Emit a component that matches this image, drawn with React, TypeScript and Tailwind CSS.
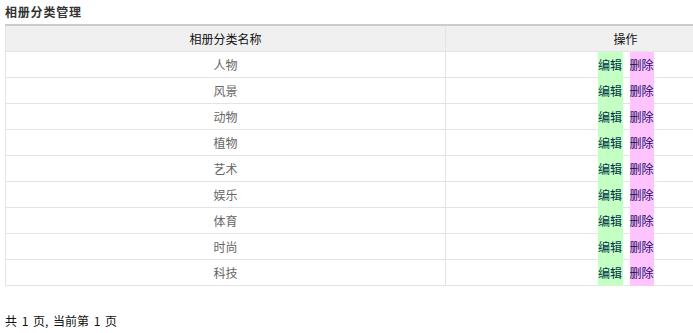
import React from "react";

const rows = ["人物", "风景", "动物", "植物", "艺术", "娱乐", "体育", "时尚", "科技"];

export default function App() {
  const font = { fontFamily: '"Noto Sans CJK SC", "Liberation Sans", sans-serif' };
  return (
    <div className="w-[693px] h-[333px] overflow-hidden bg-white text-[12px] leading-none" style={font}>
      <div className="h-[24px] pl-[5px] flex items-center font-bold text-[#333] tracking-[0.8px]">相册分类管理</div>
      <div className="ml-[5px] w-[800px] border-t-2 border-[#cccccc]">
        <div className="flex h-[26px] bg-[#f0f0f0] border-b border-[#e3e3e3] text-[#111]">
          <div className="w-[440px] border-l border-[#e3e3e3] flex items-center justify-center">相册分类名称</div>
          <div className="w-[360px] border-l border-[#e3e3e3] flex items-center justify-center">操作</div>
        </div>
        {rows.map((r) => (
          <div key={r} className="flex h-[26px] border-b border-[#e3e3e3]">
            <div className="w-[440px] border-l border-[#e3e3e3] flex items-center justify-center text-[#666]">{r}</div>
            <div className="w-[360px] border-l border-[#e3e3e3] flex justify-center gap-[7px]">
              <span className="-mb-px relative w-[25px] bg-[#c4ffc4] text-[#003344] flex items-center justify-center">编辑</span>
              <span className="-mb-px relative w-[24px] bg-[#ffc4ff] text-[#1a0a66] flex items-center justify-center">删除</span>
            </div>
          </div>
        ))}
      </div>
      <div className="pl-[5px] mt-[29px] text-[#111] [word-spacing:2px]">共 1 页, 当前第 1 页</div>
    </div>
  );
}
